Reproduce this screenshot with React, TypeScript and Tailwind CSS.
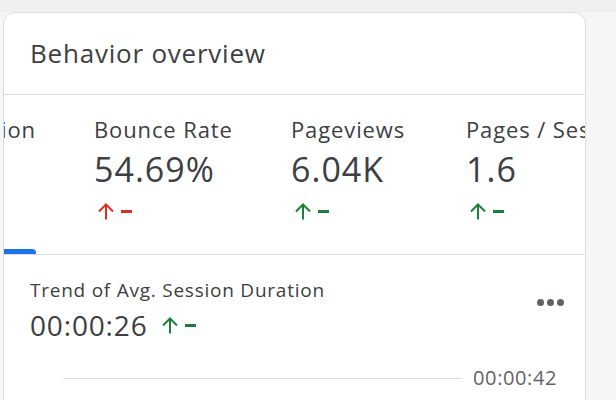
import React from "react";

function UpArrow({ color }: { color: string }) {
  return (
    <svg width="18" height="18" viewBox="0 0 18 18" fill="none" stroke={color} strokeWidth="2">
      <path d="M9 17.5V2.5" />
      <path d="M2 9.5L9 2.5L16 9.5" />
    </svg>
  );
}

function Delta({ color }: { color: string }) {
  return (
    <div className="flex items-center gap-[6px]">
      <UpArrow color={color} />
      <div className="h-[3px] w-[11px]" style={{ backgroundColor: color }} />
    </div>
  );
}

function Metric({ label, value, color, w }: { label: string; value: string; color: string; w: string }) {
  return (
    <div className={`flex shrink-0 flex-col pt-[20px] ${w}`}>
      <div className="whitespace-nowrap text-[22px] leading-[28px] tracking-[0.04em] text-[#3c4043]">{label}</div>
      <div className="mt-[6px] whitespace-nowrap text-[34px] leading-[40px] tracking-[0.03em] text-[#3c4043]">{value}</div>
      <div className="ml-[3px] mt-[13px]">
        <Delta color={color} />
      </div>
    </div>
  );
}

export default function App() {
  return (
    <div className="h-[400px] w-[616px] overflow-hidden bg-[#eef0f2] font-['Open_Sans',sans-serif]">
      <div className="mt-[12px] flex h-[400px] bg-[#f5f6f7]">
        <div className="ml-[3px] h-[420px] w-[583px] shrink-0 overflow-hidden rounded-[12px] border border-[#dadce0] bg-white">
          <div className="flex h-[82px] items-center border-b border-[#dadce0] pl-[26px]">
            <div className="text-[26px] font-normal tracking-[0.03em] text-[#3c4043]">Behavior overview</div>
          </div>
          <div className="flex h-[160px] overflow-hidden border-b border-[#dadce0]">
            <div className="flex h-full w-[32px] shrink-0 flex-col">
              <div className="flex flex-1 justify-end">
                <div className="flex shrink-0 flex-col pt-[20px]">
                  <div className="whitespace-nowrap text-[22px] leading-[28px] tracking-[0.04em] text-[#3c4043]">
                    Avg. Session Duration
                  </div>
                </div>
              </div>
              <div className="h-[5px] w-full rounded-tr-[4px] bg-[#1a73e8]" />
            </div>
            <div className="ml-[58px] flex">
              <Metric label="Bounce Rate" value="54.69%" color="#d93025" w="w-[197px]" />
              <Metric label="Pageviews" value="6.04K" color="#188038" w="w-[175px]" />
              <Metric label="Pages / Session" value="1.6" color="#188038" w="w-max" />
            </div>
          </div>
          <div className="flex flex-col">
            <div className="flex items-start justify-between pl-[26px] pr-[21px] pt-[23px]">
              <div className="flex flex-col">
                <div className="text-[19px] leading-[25px] tracking-[0.04em] text-[#3c4043]">
                  Trend of Avg. Session Duration
                </div>
                <div className="mt-[5px] flex items-center">
                  <div className="text-[28px] font-medium leading-[34px] tracking-[0.03em] text-[#3c4043]">00:00:26</div>
                  <div className="ml-[13px]">
                    <Delta color="#188038" />
                  </div>
                </div>
              </div>
              <div className="mt-[21px] flex items-center gap-[3px]">
                <div className="h-[7px] w-[7px] rounded-full bg-[#5f6368]" />
                <div className="h-[7px] w-[7px] rounded-full bg-[#5f6368]" />
                <div className="h-[7px] w-[7px] rounded-full bg-[#5f6368]" />
              </div>
            </div>
            <div className="mt-[24px] flex items-center pl-[59px] pr-[28px]">
              <div className="h-px flex-1 bg-[#dadce0]" />
              <div className="ml-[11px] text-[20px] leading-[24px] tracking-[0.03em] text-[#5f6368]">00:00:42</div>
            </div>
          </div>
        </div>
      </div>
    </div>
  );
}
